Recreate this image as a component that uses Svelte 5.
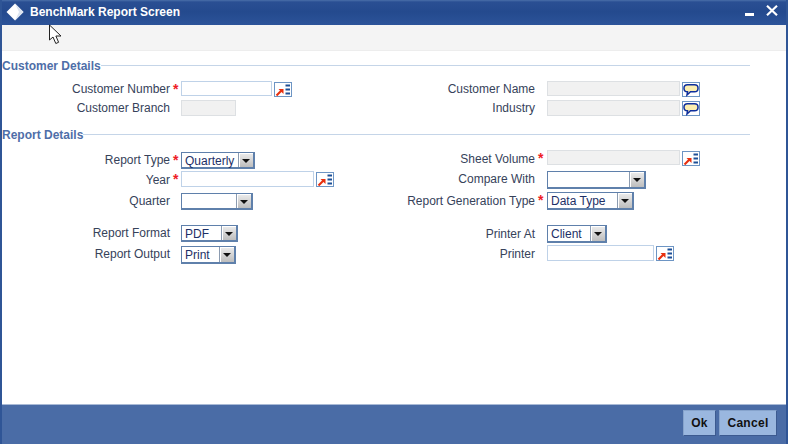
<script>
  const custLeft = [
    { label: 'Customer Number', req: true, kind: 'input', w: 91, h: 19, hh: 15, lift: 0, lookup: true },
    { label: 'Customer Branch', kind: 'input', w: 55, h: 16, hh: 16, off: true, lift: 0 }
  ];
  const custRight = [
    { label: 'Customer Name', kind: 'input', w: 133, h: 19, hh: 15, off: true, chat: true, lift: 0 },
    { label: 'Industry', kind: 'input', w: 133, h: 16, hh: 16, off: true, chat: true, lift: 0 }
  ];
  const repLeft = [
    { label: 'Report Type', req: true, kind: 'select', w: 74, h: 19, hh: 17, value: 'Quarterly', lift: -1 },
    { label: 'Year', req: true, kind: 'input', w: 133, h: 22, hh: 16, lookup: true, lift: 1 },
    { label: 'Quarter', kind: 'select', w: 72, h: 32, hh: 17, value: '', lift: -1 },
    { label: 'Report Format', kind: 'select', w: 57, h: 21, hh: 17, value: 'PDF', lift: -1 },
    { label: 'Report Output', kind: 'select', w: 55, h: 18, hh: 18, value: 'Print', lift: -1 }
  ];
  const repRight = [
    { label: 'Sheet Volume', req: true, kind: 'input', w: 133, h: 21, hh: 15, off: true, lookup: true, lift: 1 },
    { label: 'Compare With', kind: 'select', w: 99, h: 21, hh: 18, value: '', lift: -1 },
    { label: 'Report Generation Type', req: true, kind: 'select', w: 87, h: 33, hh: 18, value: 'Data Type', lift: 0 },
    { label: 'Printer At', kind: 'select', w: 60, h: 20, hh: 18, value: 'Client', lift: 0 },
    { label: 'Printer', kind: 'input', w: 107, h: 16, hh: 16, lookup: true, lift: 1 }
  ];
  const sections = [
    { title: 'Customer Details', left: custLeft, right: custRight, cls: 'first' },
    { title: 'Report Details', left: repLeft, right: repRight, cls: 'second' }
  ];
</script>

{#snippet row(r)}
  <div class="row" style="height:{r.h}px">
    <span class="label" style="height:{r.hh}px;transform:translateY({r.lift}px)">{r.label}</span>
    <span class="star">{r.req ? '*' : ''}</span>
    {#if r.kind === 'input'}
      <input class="field" class:off={r.off} style="width:{r.w}px;height:{r.hh}px" readonly={r.off} aria-label={r.label} />
    {:else}
      <div class="select" style="width:{r.w}px;height:{r.hh}px">
        <span class="value">{r.value}</span>
        <span class="drop"><i></i></span>
      </div>
    {/if}
    {#if r.lookup}
      <svg class="ico" width="18" height="15" viewBox="0 0 18 15">
        <rect x=".5" y=".5" width="17" height="14" fill="#fff" stroke="#6d95c4" />
        <path d="M2.5 13.5 L7.5 8.5" stroke="#e8300f" stroke-width="2.2" fill="none" />
        <path d="M4.5 7 H9.5 V12 Z" fill="#e8300f" />
        <path d="M11.5 3.5h4.5M11.5 7.5h4.5M11.5 11.5h4.5" stroke="#1d4f96" stroke-width="2" />
      </svg>
    {/if}
    {#if r.chat}
      <svg class="ico" width="18" height="15" viewBox="0 0 18 15">
        <rect x=".5" y=".5" width="17" height="14" fill="#fff" stroke="#6d95c4" />
        <path d="M5.5 2.8 H12.5 Q16 2.8 16 6 V6.5 Q16 9.8 12.5 9.8 H8.5 L5 13 L5.5 9.8 Q2 9.8 2 6.5 V6 Q2 2.8 5.5 2.8 Z" fill="#fbeeb0" stroke="#0f2f9c" stroke-width="1.5" />
      </svg>
    {/if}
  </div>
{/snippet}

<div class="win">
  <header class="title">
    <svg class="logo" width="18" height="18" viewBox="0 0 18 18">
      <path d="M9 .5 17.5 9 9 17.5 .5 9Z" fill="#fff" />
      <path d="M17.5 9 9 17.5 13 9 9 .5Z" fill="#dce4f0" />
    </svg>
    <span class="name">BenchMark Report Screen</span>
    <span class="min"></span>
    <svg class="close" width="12" height="11" viewBox="0 0 12 11">
      <path d="M1 .8 11 10.2M11 .8 1 10.2" stroke="#fff" stroke-width="2.2" />
    </svg>
  </header>
  <div class="tools"></div>
  <main class="body">
    {#each sections as s}
      <section class={s.cls}>
        <div class="head"><h2>{s.title}</h2><hr /></div>
        <div class="cols">
          <div class="col left">
            {#each s.left as r}{@render row(r)}{/each}
          </div>
          <div class="col right">
            {#each s.right as r}{@render row(r)}{/each}
          </div>
        </div>
      </section>
    {/each}
  </main>
  <footer class="foot">
    <button class="ok">Ok</button>
    <button class="cancel">Cancel</button>
  </footer>
  <svg class="cursor" width="16" height="21" viewBox="0 0 16 21">
    <path d="M1.5 1 V16 L5 13 L7.8 19.5 L10.6 18.3 L7.9 12 H13 Z" fill="#fff" stroke="#222" stroke-width="1" />
  </svg>
</div>

<style>
  :global(body) { margin: 0; background: #fff; }
  .win {
    position: relative;
    width: 788px;
    height: 444px;
    display: flex;
    flex-direction: column;
    overflow: hidden;
    font-family: "Liberation Sans", Arial, sans-serif;
    font-size: 12px;
    box-sizing: border-box;
    border-left: 2px solid #2f5596;
    border-right: 2px solid #2f5596;
    background: #fff;
  }
  .title {
    height: 25px;
    margin: 0 -2px;
    flex: none;
    display: flex;
    align-items: center;
    background: linear-gradient(#4a6fa9 0, #2a4f93 2px, #244a8e 12px, #2c5399 25px);
    color: #fff;
    position: relative;
  }
  .logo { margin: 0 0 1px 6px; }
  .name { margin: 0 0 1px 6px; font-weight: 700; font-size: 12px; }
  .min { width: 9px; height: 3px; background: #fff; margin: 4px 0 0 auto; }
  .close { margin: 0 10px 4px 12px; }
  .tools {
    height: 26px;
    flex: none;
    background: #f4f4f4;
    border-bottom: 1px solid #ededed;
    box-sizing: border-box;
  }
  .body { flex: 1; }
  .head {
    display: flex;
    align-items: center;
    height: 15px;
    width: 748px;
  }
  h2 {
    margin: 0;
    font-size: 12px;
    font-weight: 700;
    color: #4e6ea8;
    white-space: nowrap;
  }
  hr {
    flex: 1;
    margin: 0;
    border: none;
    height: 1px;
    background: #c5d5e8;
  }
  .first { padding-top: 7px; }
  .first .cols { padding-top: 8px; }
  .second { padding-top: 11px; }
  .second .cols { padding-top: 8px; }
  .second .col.left { padding-top: 2px; }
  .cols { display: flex; }
  .col { flex: none; }
  .col.left { width: 366px; }
  .row {
    display: flex;
    align-items: flex-start;
  }
  .label {
    flex: none;
    text-align: right;
    color: #36425a;
    display: flex;
    align-items: center;
    justify-content: flex-end;
    white-space: nowrap;
  }
  .col.left .label { width: 168px; }
  .col.right .label { width: 167px; }
  .star {
    flex: none;
    width: 11px;
    color: #ee1c25;
    font-weight: 700;
    font-size: 14px;
    line-height: 17px;
    padding-left: 3px;
    box-sizing: border-box;
  }
  .col.right .star { width: 12px; }
  .field {
    flex: none;
    box-sizing: border-box;
    border: 1px solid #bfd2e8;
    background: #fff;
    padding: 0;
    margin: 0;
    outline: none;
  }
  .field.off { background: #f1f1f1; border-color: #dde0e3; }
  .select {
    flex: none;
    box-sizing: border-box;
    border: 1px solid #5f80ab;
    border-right-width: 2px;
    border-bottom-width: 2px;
    background: #fff;
    display: flex;
    align-items: center;
    justify-content: space-between;
    color: #1d2f66;
  }
  .value { padding: 1px 0 0 3px; white-space: nowrap; }
  .drop {
    flex: none;
    width: 15px;
    height: 100%;
    background: linear-gradient(#ededed, #bdbdbd);
    border-left: 1px solid #8b9bb0;
    box-shadow: inset 1px 1px 0 #fff;
    box-sizing: border-box;
    display: flex;
    align-items: center;
    justify-content: center;
  }
  .drop i {
    width: 0;
    height: 0;
    border-left: 4px solid transparent;
    border-right: 4px solid transparent;
    border-top: 4px solid #111;
    margin-top: 1px;
  }
  .ico { flex: none; margin: 1px 0 0 2px; }
  .foot {
    height: 40px;
    flex: none;
    margin: 0 -2px;
    background: #4a6ca6;
    border-top: 1px solid #a9bad6;
    box-sizing: border-box;
    display: flex;
    justify-content: flex-end;
    align-items: flex-start;
    gap: 3px;
    padding: 5px 11px 0 0;
  }
  button {
    height: 26px;
    padding: 0;
    font: 700 12px "Liberation Sans", Arial, sans-serif;
    letter-spacing: .3px;
    color: #111;
    background: #9ab7df;
    border: 1px solid #86a3cc;
    border-right-color: #3c5a90;
    border-bottom-color: #3c5a90;
    box-sizing: border-box;
  }
  .ok { width: 33px; }
  .cancel { width: 58px; }
  .cursor { position: absolute; left: 46px; top: 24px; }
</style>
